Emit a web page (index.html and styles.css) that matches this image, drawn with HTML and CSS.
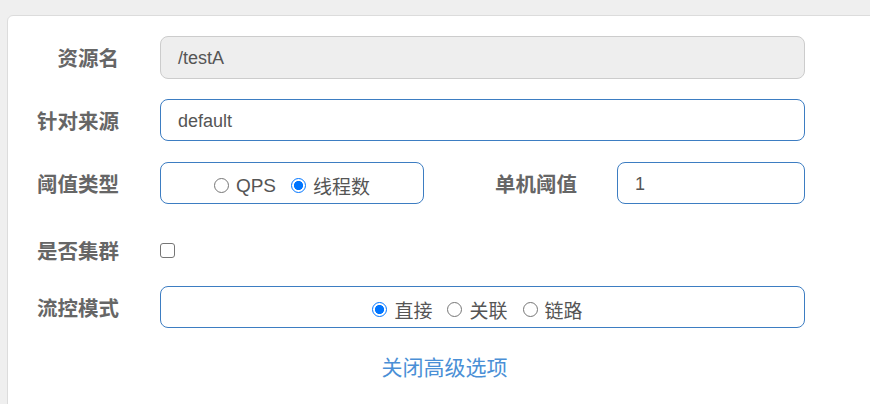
FILE: index.html
```html
<!DOCTYPE html>
<html lang="zh">
<head>
<meta charset="utf-8">
<link rel="stylesheet" href="styles.css">
</head>
<body>
<div class="card">
  <div class="row">
    <label class="lbl">资源名</label>
    <div class="field wide"><div class="input disabled">/testA</div></div>
  </div>
  <div class="row">
    <label class="lbl">针对来源</label>
    <div class="field wide"><div class="input">default</div></div>
  </div>
  <div class="row">
    <label class="lbl">阈值类型</label>
    <div class="field half">
      <div class="input radios">
        <label class="opt"><input type="radio" name="grade"><span>QPS</span></label>
        <label class="opt"><input type="radio" name="grade" checked><span>线程数</span></label>
      </div>
    </div>
    <label class="lbl lbl2">单机阈值</label>
    <div class="field small"><div class="input">1</div></div>
  </div>
  <div class="row row-check">
    <label class="lbl">是否集群</label>
    <div class="field"><input type="checkbox" class="check"></div>
  </div>
  <div class="row">
    <label class="lbl">流控模式</label>
    <div class="field wide">
      <div class="input radios radios-wide">
        <label class="opt"><input type="radio" name="strategy" checked><span>直接</span></label>
        <label class="opt"><input type="radio" name="strategy"><span>关联</span></label>
        <label class="opt"><input type="radio" name="strategy"><span>链路</span></label>
      </div>
    </div>
  </div>
  <div class="more"><a class="link">关闭高级选项</a></div>
</div>
</body>
</html>
```

FILE: styles.css
```css
html, body {
  margin: 0;
  padding: 0;
  background: #efefef;
  overflow: hidden;
  height: 404px;
}
body {
  padding: 15px 0 0 7px;
  box-sizing: border-box;
  font-family: "Liberation Sans", "Noto Sans CJK SC", sans-serif;
  font-size: 18px;
  color: #555;
}
.card {
  width: 875px;
  height: 420px;
  background: #fff;
  border: 1px solid #dcdcdc;
  border-radius: 6px;
  padding-top: 20px;
  box-sizing: border-box;
}
.row {
  display: flex;
  align-items: center;
  height: 42px;
  margin-bottom: 21px;
}
.row-check {
  height: 40px;
  padding-top: 10px;
  box-sizing: border-box;
}
.lbl {
  width: 111px;
  text-align: right;
  font-weight: bold;
  font-size: 20.5px;
  color: #666;
  margin-right: 41px;
  flex: none;
}
.lbl2 {
  width: 153px;
  margin-right: 40px;
}
.field { flex: none; }
.field.wide { width: 645px; }
.field.half { width: 264px; }
.field.small { width: 188px; }
.input {
  height: 42px;
  box-sizing: border-box;
  border: 1px solid #3d7dc2;
  border-radius: 8px;
  padding: 2px 17px 0;
  display: flex;
  align-items: center;
  background: #fff;
  color: #555;
}
.input.disabled {
  background: #eee;
  border-color: #ccc;
  height: 43px;
}
.radios {
  justify-content: center;
  gap: 15px;
  padding: 5px 0 0 0;
  font-size: 19px;
}
.radios-wide {
  padding-right: 10px;
}
.opt {
  display: flex;
  align-items: center;
}
.opt input {
  -webkit-appearance: none;
  appearance: none;
  width: 15px;
  height: 15px;
  margin: 0 7px 0 0;
  border: 1.3px solid #767676;
  border-radius: 50%;
  box-sizing: border-box;
  background: #fff;
  flex: none;
}
.opt input:checked {
  border: 1.5px solid #0075ff;
  background: radial-gradient(circle, #0075ff 0 4.3px, #fff 4.8px);
}
.check {
  -webkit-appearance: none;
  appearance: none;
  width: 15px;
  height: 15px;
  margin: 0;
  display: block;
  border: 1.3px solid #767676;
  border-radius: 3px;
  box-sizing: border-box;
  background: #fff;
}
.more {
  text-align: center;
  padding-top: 2px;
}
.link {
  color: #4a8fd6;
  font-size: 21px;
  cursor: pointer;
}
```
